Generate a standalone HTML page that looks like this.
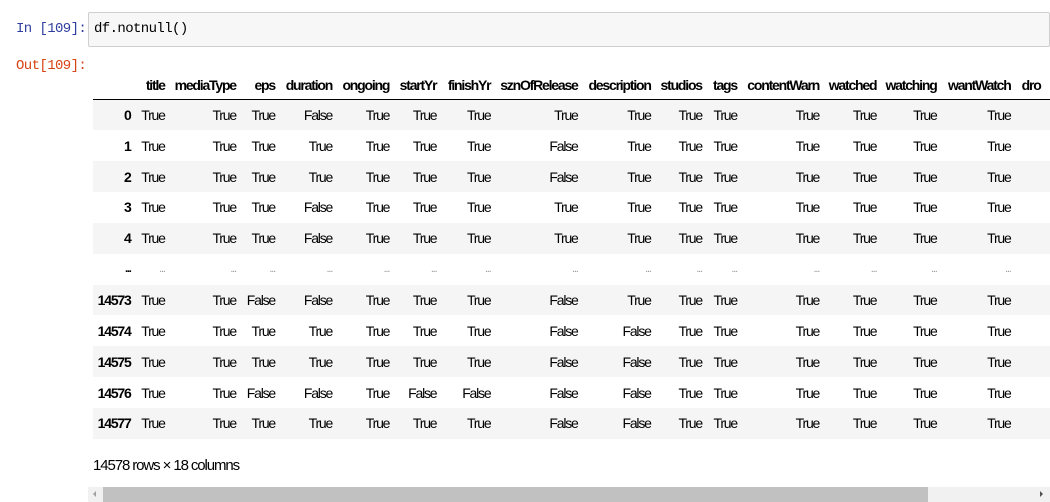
<!DOCTYPE html>
<html><head><meta charset="utf-8"><style>
body{margin:0;width:1050px;height:502px;overflow:hidden;background:#fff;font-family:"Liberation Sans",Arial,sans-serif;position:relative}
.p{position:absolute;font-family:"Liberation Mono",monospace;font-size:14px;letter-spacing:-0.6px}
.inbox{position:absolute;left:88px;top:12px;width:960px;height:33px;background:#f7f7f7;border:1px solid #cfcfcf;border-radius:2px}
table{position:absolute;left:93px;top:71px;border-collapse:collapse;table-layout:fixed;font-size:14px;letter-spacing:-1.2px;color:#000}
td,th{padding:0;text-align:right;white-space:nowrap;overflow:visible}
th{height:28px;font-weight:bold;vertical-align:middle}
thead tr{border-bottom:1px solid #000}
tbody tr{height:30.85px}
tbody tr:nth-child(odd){background:#f5f5f5}
tbody th{font-weight:bold}
.el{color:#999;font-size:11px}
.el th{color:#000}
.foot{position:absolute;left:93px;top:457px;font-size:15px;letter-spacing:-1.1px}
.sb{position:absolute;left:88px;top:487px;width:962px;height:15px;background:#f1f1f1}
.th{position:absolute;left:103px;top:487px;width:825px;height:15px;background:#c1c1c1}
</style></head><body>
<div class="p" style="left:16px;top:21px;color:#303f9f">In [109]:</div>
<div class="inbox"></div>
<div class="p" style="left:94px;top:21px;color:#000">df.notnull()</div>
<div class="p" style="left:16px;top:58px;color:#d84315">Out[109]:</div>
<table>
<colgroup><col style="width:38px"><col style="width:35px"><col style="width:72px"><col style="width:40px"><col style="width:58px"><col style="width:58px"><col style="width:48px"><col style="width:55px"><col style="width:88px"><col style="width:74px"><col style="width:52px"><col style="width:36px"><col style="width:83px"><col style="width:58px"><col style="width:61px"><col style="width:75px"><col style="width:40px"></colgroup>
<thead><tr><th></th><th>title</th><th>mediaType</th><th>eps</th><th>duration</th><th>ongoing</th><th>startYr</th><th>finishYr</th><th>sznOfRelease</th><th>description</th><th>studios</th><th>tags</th><th>contentWarn</th><th>watched</th><th>watching</th><th>wantWatch</th><th style="text-align:left;padding-left:11px">dro</th></tr></thead>
<tbody>
<tr><th>0</th><td>True</td><td>True</td><td>True</td><td>False</td><td>True</td><td>True</td><td>True</td><td>True</td><td>True</td><td>True</td><td>True</td><td>True</td><td>True</td><td>True</td><td>True</td><td></td></tr>
<tr><th>1</th><td>True</td><td>True</td><td>True</td><td>True</td><td>True</td><td>True</td><td>True</td><td>False</td><td>True</td><td>True</td><td>True</td><td>True</td><td>True</td><td>True</td><td>True</td><td></td></tr>
<tr><th>2</th><td>True</td><td>True</td><td>True</td><td>True</td><td>True</td><td>True</td><td>True</td><td>False</td><td>True</td><td>True</td><td>True</td><td>True</td><td>True</td><td>True</td><td>True</td><td></td></tr>
<tr><th>3</th><td>True</td><td>True</td><td>True</td><td>False</td><td>True</td><td>True</td><td>True</td><td>True</td><td>True</td><td>True</td><td>True</td><td>True</td><td>True</td><td>True</td><td>True</td><td></td></tr>
<tr><th>4</th><td>True</td><td>True</td><td>True</td><td>False</td><td>True</td><td>True</td><td>True</td><td>True</td><td>True</td><td>True</td><td>True</td><td>True</td><td>True</td><td>True</td><td>True</td><td></td></tr>
<tr class="el"><th>...</th><td>...</td><td>...</td><td>...</td><td>...</td><td>...</td><td>...</td><td>...</td><td>...</td><td>...</td><td>...</td><td>...</td><td>...</td><td>...</td><td>...</td><td>...</td><td></td></tr>
<tr><th>14573</th><td>True</td><td>True</td><td>False</td><td>False</td><td>True</td><td>True</td><td>True</td><td>False</td><td>True</td><td>True</td><td>True</td><td>True</td><td>True</td><td>True</td><td>True</td><td></td></tr>
<tr><th>14574</th><td>True</td><td>True</td><td>True</td><td>True</td><td>True</td><td>True</td><td>True</td><td>False</td><td>False</td><td>True</td><td>True</td><td>True</td><td>True</td><td>True</td><td>True</td><td></td></tr>
<tr><th>14575</th><td>True</td><td>True</td><td>True</td><td>True</td><td>True</td><td>True</td><td>True</td><td>False</td><td>False</td><td>True</td><td>True</td><td>True</td><td>True</td><td>True</td><td>True</td><td></td></tr>
<tr><th>14576</th><td>True</td><td>True</td><td>False</td><td>False</td><td>True</td><td>False</td><td>False</td><td>False</td><td>False</td><td>True</td><td>True</td><td>True</td><td>True</td><td>True</td><td>True</td><td></td></tr>
<tr><th>14577</th><td>True</td><td>True</td><td>True</td><td>True</td><td>True</td><td>True</td><td>True</td><td>False</td><td>False</td><td>True</td><td>True</td><td>True</td><td>True</td><td>True</td><td>True</td><td></td></tr>
</tbody></table>
<div class="foot">14578 rows × 18 columns</div>
<div class="sb"></div><div class="th"></div>
<div style="position:absolute;left:93px;top:491px;width:0;height:0;border-top:3px solid transparent;border-bottom:3px solid transparent;border-right:3px solid #a0a0a0"></div>
<div style="position:absolute;left:1040px;top:491px;width:0;height:0;border-top:3px solid transparent;border-bottom:3px solid transparent;border-left:3px solid #505050"></div>
</body></html>
